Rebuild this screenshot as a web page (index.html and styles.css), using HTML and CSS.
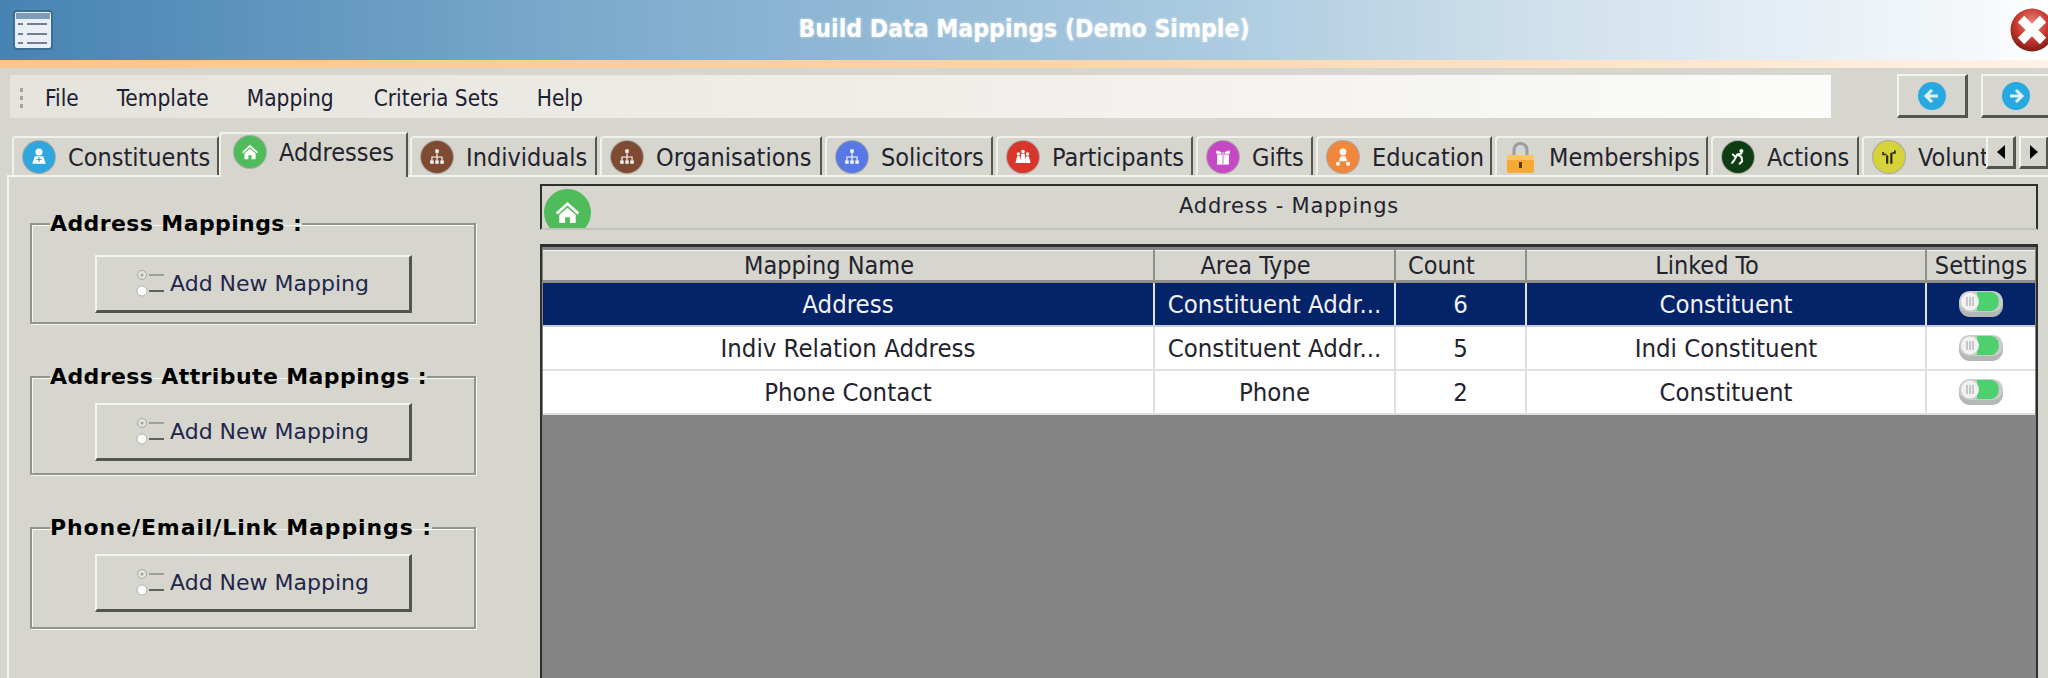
FILE: index.html
```html
<!DOCTYPE html>
<html lang="en">
<head>
<meta charset="utf-8">
<title>Build Data Mappings (Demo Simple)</title>
<link rel="stylesheet" href="styles.css">
</head>
<body>
<svg class="defs" width="0" height="0" aria-hidden="true">
  <symbol id="g-person" viewBox="-3 -3 38 38"><circle cx="16" cy="10" r="4.200" fill="#fff"/><path d="M8 24l3-9h10l3 9z" fill="#fff"/><path d="M16 16v6M13 19h6" stroke="#2ea6e0" stroke-width="1.400"/></symbol>
  <symbol id="g-house" viewBox="-4 -4 40 40"><path d="M16 7l10 9-1.600 1.600L16 10 7.600 17.600 6 16z" fill="#fff"/><path d="M9 18l7-6 7 6v7h-5v-5h-4v5H9z" fill="#fff"/></symbol>
  <symbol id="g-org" viewBox="-3 -3 38 38"><g fill="#fff"><rect x="14" y="7" width="4" height="4"/><rect x="8" y="20" width="4" height="4"/><rect x="14" y="20" width="4" height="4"/><rect x="20" y="20" width="4" height="4"/></g><path d="M16 11v9M10 20v-4h12v4" stroke="#fff" stroke-width="1.300" fill="none"/></symbol>
  <symbol id="g-group" viewBox="-3 -3 38 38"><g fill="#fff"><path d="M7 23l2-8h3l2 8z"/><path d="M12 23l2-11h4l2 11z"/><path d="M18 23l2-8h3l2 8z"/><circle cx="10.500" cy="12.500" r="2"/><circle cx="16" cy="9.500" r="2.200"/><circle cx="21.500" cy="12.500" r="2"/></g></symbol>
  <symbol id="g-gift" viewBox="-3 -3 38 38"><g fill="#fff"><rect x="9" y="13" width="14" height="12"/><path d="M8 8l6 2v2H8zM24 8l-6 2v2h6z"/></g><rect x="15" y="10" width="2" height="15" fill="#e7a8e6"/></symbol>
  <symbol id="g-edu" viewBox="-3 -3 38 38"><g fill="#fff"><circle cx="16" cy="10" r="4"/><path d="M11 21l2-6h6l2 6z"/><circle cx="10" cy="24" r="2.500"/><circle cx="22" cy="24" r="2.500"/></g></symbol>
  <symbol id="g-run" viewBox="-3 -3 38 38"><g fill="none" stroke="#fff" stroke-width="2.400" stroke-linecap="round"><path d="M15 13l-3 6-3 4M15 13l5 3 1 5-3 3M15 13l5-1M12 15l-2-2"/></g><circle cx="20" cy="9" r="2.400" fill="#fff"/></symbol>
  <symbol id="g-vol" viewBox="-3 -3 38 38"><g fill="#2a2a18"><rect x="12.500" y="14" width="2.600" height="10"/><rect x="17.500" y="11" width="2.600" height="13"/><path d="M8 10h2v2h3v2H8zM24 8h-2v2h-2v2h4z"/></g></symbol>
  <symbol id="g-lever" viewBox="0 0 30 30"><circle cx="6" cy="6" r="4.500" fill="#e4e4df" stroke="#a9a9a4"/><circle cx="6" cy="6" r="1.600" fill="#a9a9a4"/><circle cx="6" cy="22" r="5" fill="#fbfbfb" stroke="#b4b4ae"/><path d="M13 6h15" stroke="#8d8d88" stroke-width="1.500"/><path d="M13 22h15" stroke="#55554f" stroke-width="1.800"/></symbol>
  <symbol id="g-toggle" viewBox="0 0 44 26"><rect y="1" width="44" height="25" rx="11" fill="#b3b8b4"/><rect y="0" width="44" height="21" rx="10.500" fill="#c9cdc9"/><path d="M18 1h15a10 10 0 0 1 0 19H18z" fill="#4fd06f"/><circle cx="11" cy="10.500" r="9" fill="#f2f2f2"/><path d="M8 6v9M11 6v9M14 6v9" stroke="#a9aaa9" stroke-width="1.200"/></symbol>
</svg>

<header class="titlebar">
  <svg class="app-icon" viewBox="0 0 40 40" aria-hidden="true">
    <rect x="1" y="1" width="38" height="38" rx="3" fill="#e9eff4" stroke="#3d6f95" stroke-width="2"/>
    <rect x="3" y="3" width="34" height="6" fill="#7d9cb8"/>
    <g stroke="#6f8092" stroke-width="2"><path d="M5 14h5M14 14h20M5 24h5M14 24h20M5 33h5M14 33h20"/></g>
  </svg>
  <h1 class="title">Build Data Mappings (Demo Simple)</h1>
  <svg class="close-icon" viewBox="0 0 44 44" aria-hidden="true">
    <defs><radialGradient id="red" cx="50%" cy="35%" r="65%"><stop offset="0" stop-color="#ef8a80"/><stop offset=".6" stop-color="#c5362c"/><stop offset="1" stop-color="#7d1d16"/></radialGradient></defs>
    <circle cx="22" cy="22" r="21.500" fill="url(#red)"/>
    <path d="M11 11l22 22M33 11L11 33" stroke="#fff" stroke-width="9" stroke-linecap="butt"/>
  </svg>
</header>
<div class="accent"></div>

<div class="toolbar">
  <nav class="menubar">
    <span class="grip"></span>
    <span class="menu-item menu-file">File</span>
    <span class="menu-item menu-template">Template</span>
    <span class="menu-item menu-mapping">Mapping</span>
    <span class="menu-item menu-criteria">Criteria Sets</span>
    <span class="menu-item menu-help">Help</span>
  </nav>
  <div class="nav-buttons">
    <button class="raised nav-btn" aria-label="Back">
      <svg viewBox="0 0 28 28" class="nav-icon"><circle cx="14" cy="14" r="14" fill="#29a9e1"/><path d="M20 14H9M14 8l-6 6 6 6" stroke="#dff2fb" stroke-width="3" fill="none"/></svg>
    </button>
    <button class="raised nav-btn" aria-label="Forward">
      <svg viewBox="0 0 28 28" class="nav-icon"><circle cx="14" cy="14" r="14" fill="#29a9e1"/><path d="M8 14h11M14 8l6 6-6 6" stroke="#dff2fb" stroke-width="3" fill="none"/></svg>
    </button>
  </div>
</div>

<div class="tabstrip">
  <div class="tabs">
    <div class="tab"><svg class="tab-icon c-blue"><use href="#g-person"/></svg><span class="tab-label">Constituents</span></div>
    <div class="tab tab-active"><svg class="tab-icon c-green"><use href="#g-house"/></svg><span class="tab-label">Addresses</span></div>
    <div class="tab"><svg class="tab-icon c-brown"><use href="#g-org"/></svg><span class="tab-label">Individuals</span></div>
    <div class="tab"><svg class="tab-icon c-brown"><use href="#g-org"/></svg><span class="tab-label">Organisations</span></div>
    <div class="tab"><svg class="tab-icon c-indigo"><use href="#g-org"/></svg><span class="tab-label">Solicitors</span></div>
    <div class="tab"><svg class="tab-icon c-red"><use href="#g-group"/></svg><span class="tab-label">Participants</span></div>
    <div class="tab"><svg class="tab-icon c-magenta"><use href="#g-gift"/></svg><span class="tab-label">Gifts</span></div>
    <div class="tab"><svg class="tab-icon c-orange"><use href="#g-edu"/></svg><span class="tab-label">Education</span></div>
    <div class="tab"><svg class="tab-icon lock" viewBox="0 0 29 32"><path d="M8 15V9a6.500 6.500 0 0 1 13 0v6" fill="none" stroke="#9a9da3" stroke-width="3"/><rect x="1" y="14" width="27" height="18" rx="2" fill="#f7a935"/><rect x="1" y="14" width="27" height="5" fill="#fcc65f"/><rect x="13" y="21" width="3" height="6" fill="#5b3a10"/></svg><span class="tab-label">Memberships</span></div>
    <div class="tab"><svg class="tab-icon c-dark"><use href="#g-run"/></svg><span class="tab-label">Actions</span></div>
    <div class="tab tab-cut"><svg class="tab-icon c-yellow"><use href="#g-vol"/></svg><span class="tab-label">Volunt</span></div>
  </div>
  <div class="tab-scroll">
    <button class="raised scroll-btn" aria-label="Previous"><span class="tri tri-left"></span></button>
    <button class="raised scroll-btn" aria-label="Next"><span class="tri tri-right"></span></button>
  </div>
</div>

<main class="page">
  <aside class="sidebar">
    <fieldset class="group group-first">
      <legend>Address Mappings :</legend>
      <button class="raised add-btn"><svg class="lever"><use href="#g-lever"/></svg>Add New Mapping</button>
    </fieldset>
    <fieldset class="group group-second">
      <legend>Address Attribute Mappings :</legend>
      <button class="raised add-btn"><svg class="lever"><use href="#g-lever"/></svg>Add New Mapping</button>
    </fieldset>
    <fieldset class="group group-third">
      <legend>Phone/Email/Link Mappings :</legend>
      <button class="raised add-btn"><svg class="lever"><use href="#g-lever"/></svg>Add New Mapping</button>
    </fieldset>
  </aside>

  <section class="content">
    <div class="section-head">
      <svg class="head-icon c-green"><use href="#g-house"/></svg>
      <div class="section-title">Address - Mappings</div>
    </div>
    <div class="grid-box">
      <table class="grid">
        <colgroup>
          <col class="col-name"><col class="col-area"><col class="col-count"><col class="col-link"><col class="col-set">
        </colgroup>
        <thead>
          <tr><th>Mapping Name</th><th>Area Type</th><th>Count</th><th>Linked To</th><th>Settings</th></tr>
        </thead>
        <tbody>
          <tr class="selected"><td>Address</td><td>Constituent Addr...</td><td>6</td><td>Constituent</td><td><svg class="toggle"><use href="#g-toggle"/></svg></td></tr>
          <tr><td>Indiv Relation Address</td><td>Constituent Addr...</td><td>5</td><td>Indi Constituent</td><td><svg class="toggle"><use href="#g-toggle"/></svg></td></tr>
          <tr><td>Phone Contact</td><td>Phone</td><td>2</td><td>Constituent</td><td><svg class="toggle"><use href="#g-toggle"/></svg></td></tr>
        </tbody>
      </table>
    </div>
  </section>
</main>
</body>
</html>
```

FILE: styles.css
```css
* { box-sizing: border-box; }
html, body { margin: 0; height: 678px; overflow: hidden; }
body {
  width: 2048px;
  background: #d6d6ce;
  color: #23232d;
  font-family: "DejaVu Sans", "Liberation Sans", sans-serif;
  font-stretch: condensed;
  font-size: 25px;
}
.defs { position: absolute; }

/* Title */
.titlebar {
  height: 60px;
  display: grid;
  grid-template-columns: 1fr auto 1fr;
  align-items: center;
  overflow: hidden;
  background: linear-gradient(90deg, #4783b2 0%, #7eacce 30%, #a9c9df 58%, #cfe0ec 75%, #f6f9fb 97%, #ffffff 100%);
}
.app-icon { width: 40px; height: 40px; margin-left: 13px; }
.title {
  margin: 0 0 4px;
  font-size: 24.600px;
  font-weight: bold;
  color: #fff;
  text-shadow: 0 0 3px rgba(255,255,255,.6);
}
.close-icon { width: 44px; height: 44px; justify-self: end; margin-right: -6px; }
.accent {
  height: 8px;
  background: linear-gradient(90deg, #fcc58b 0%, #fdd3a6 50%, #fee8d2 85%, #fff2e6 100%);
}

/* Toolbar */
.toolbar {
  display: flex;
  margin-top: 6px;
  height: 44px;
  padding-left: 10px;
  overflow: hidden;
}
.menubar {
  width: 1821px;
  flex: none;
  height: 43px;
  margin-top: 1px;
  padding-top: 3px;
  display: flex;
  align-items: center;
  font-size: 22.500px;
  background: linear-gradient(90deg, #e4e3dc 0%, #f0eee9 50%, #fbfbf9 100%);
  color: #1d2030;
}
.grip { width: 3px; height: 20px; margin-left: 10px; background: repeating-linear-gradient(180deg, #a5a5a0 0 4px, transparent 4px 8px); }
.menu-file { margin-left: 22px; }
.menu-template { margin-left: 38px; }
.menu-mapping { margin-left: 38px; }
.menu-criteria { margin-left: 40px; }
.menu-help { margin-left: 38px; }
.nav-buttons { display: flex; gap: 13px; margin-left: 66px; flex: none; }
.raised {
  display: flex;
  align-items: center;
  justify-content: center;
  padding: 0;
  font: inherit;
  background: #d6d6ce;
  border-style: solid;
  border-color: #f3f3ef #55554f #55554f #f3f3ef;
  border-width: 2px 3px 3px 2px;
}
.nav-btn { width: 71px; height: 44px; flex: none; }
.nav-icon { width: 28px; height: 28px; }

/* Tabs */
.tabstrip { position: relative; z-index: 1; margin-top: 14px; margin-bottom: -2px; height: 45px; padding-left: 12px; overflow: hidden; }
.tabs {
  display: grid;
  grid-template-columns: 207px 185px 187px 222px 168px 197px 117px 176px 213px 148px 138px;
  column-gap: 3px;
  height: 45px;
  align-items: start;
}
.tab {
  height: 39px;
  margin-top: 4px;
  display: flex;
  align-items: center;
  padding-left: 9px;
  overflow: hidden;
  white-space: nowrap;
  border-top: 2px solid #f1f1ec;
  border-left: 2px solid #f1f1ec;
  border-right: 2px solid #55554f;
  border-top-left-radius: 4px;
}
.tab-active {
  height: 45px;
  margin-top: 0;
  margin-left: -3px;
  margin-right: -1px;
  padding-bottom: 8px;
  padding-left: 13px;
  background: #d6d6ce;
}
.tab-cut { border-right: 0; }
.tab-icon { width: 32px; height: 32px; flex: none; border-radius: 50%; box-shadow: 0 0 0 1px rgba(70,70,70,.3); }
.tab-label { margin-left: 13px; padding-top: 2px; }
.lock { width: 29px; border-radius: 0; box-shadow: none; margin-right: 1px; }
.c-blue { background: #2ea6e0; }
.c-green { background: #4fbb5b; }
.c-brown { background: #7e4a32; }
.c-indigo { background: #5878e6; }
.c-red { background: #d9362b; }
.c-magenta { background: #c648c4; }
.c-orange { background: #f0873a; }
.c-dark { background: #0f3d12; }
.c-yellow { background: #d6d33a; }
.tab-scroll { position: absolute; top: 4px; left: 1986px; display: flex; gap: 3px; }
.scroll-btn { width: 30px; height: 33px; }
.tri { width: 0; height: 0; border-style: solid; border-color: transparent; border-width: 7px 0; }
.tri-left { border-right: 8px solid #000; }
.tri-right { border-left: 8px solid #000; }

/* Page */
.page {
  height: 503px;
  margin-left: 7px;
  display: flex;
  border-top: 2px solid #f3f3ef;
  border-left: 2px solid #f3f3ef;
}
.sidebar {
  width: 531px;
  flex: none;
  display: flex;
  flex-direction: column;
  gap: 40px;
  padding: 34px 0 0 21px;
}
.group {
  width: 446px;
  margin: 0;
  padding: 13px 0 12px;
  border: 2px solid #94948f;
  box-shadow: 1px 1px 0 #f6f6f2, inset 1px 1px 0 #f6f6f2;
}
.group-first { padding-top: 18px; padding-bottom: 9px; }
.group-third { padding-bottom: 15px; }
legend {
  margin-left: 18px;
  padding: 0;
  line-height: 26px;
  font-weight: bold;
  font-stretch: normal;
  font-size: 22px;
  letter-spacing: .4px;
  color: #000;
}
.group-third legend { letter-spacing: .9px; }
.add-btn { width: 317px; height: 58px; margin: 0 auto; color: #23264a; font-size: 22px; font-stretch: normal; }
.lever { width: 30px; height: 30px; margin-right: 4px; }

/* Content */
.content { width: 1498px; flex: none; padding-top: 7px; }
.section-head {
  height: 46px;
  display: grid;
  grid-template-columns: 56px 1fr 56px;
  border-top: 2px solid #2f2f2c;
  border-left: 2px solid #2f2f2c;
  border-right: 2px solid #2f2f2c;
  border-bottom: 2px solid #c3c3bd;
  overflow: hidden;
}
.head-icon { width: 47px; height: 47px; margin: 3px 0 0 2px; border-radius: 50%; }
.section-title { text-align: center; line-height: 40px; font-size: 21px; font-stretch: normal; letter-spacing: .8px; }
.grid-box {
  height: 434px;
  margin-top: 14px;
  padding: 3px 0 0 1px;
  background: #848484;
  border-top: 3px solid #2f2f2c;
  border-left: 2px solid #2f2f2c;
  border-right: 2px solid #2f2f2c;
}
.grid { width: 1492px; table-layout: fixed; border-collapse: collapse; }
.col-name { width: 611px; }
.col-area { width: 241px; }
.col-count { width: 131px; }
.col-link { width: 400px; }
.col-set { width: 109px; }
.grid th {
  height: 31px;
  padding: 0 38px 0 0;
  font-weight: normal;
  background: #d6d6ce;
  border-top: 1px solid #f3f3ef;
  border-right: 2px solid #8f8f8a;
  border-bottom: 3px solid #8f8f8a;
}
.grid th:last-child { border-right: 0; padding-right: 0; }
.grid td {
  height: 44px;
  padding: 0;
  text-align: center;
  white-space: nowrap;
  font-size: 25.500px;
  background: #fff;
  border-right: 2px solid #dfdfdc;
  border-bottom: 2px solid #dfdfdc;
}
.grid td:last-child { border-right: 0; }
.selected td { background: #052368; color: #f0f2f6; border-bottom-color: #c5cbd8; border-right-color: #dfe3ea; }
.toggle { display: block; width: 44px; height: 26px; margin: 0 auto; }
```
